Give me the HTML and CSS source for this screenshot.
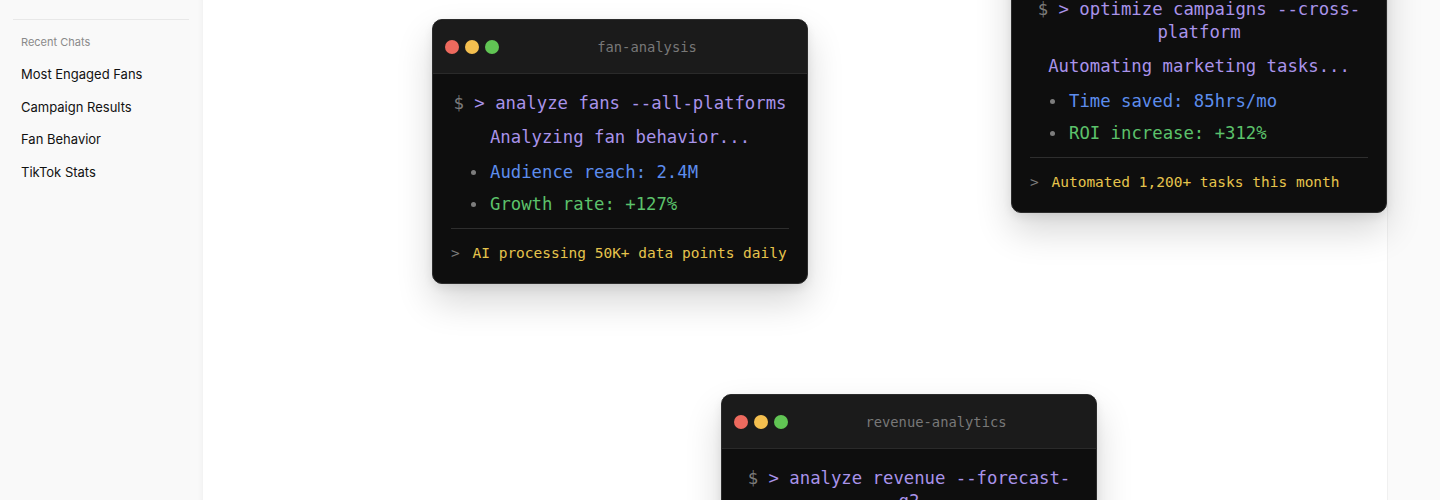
FILE: index.html
```html
<!DOCTYPE html>
<html lang="en">
<head>
<meta charset="utf-8">
<title>Fan Analytics</title>
<link rel="stylesheet" href="styles.css">
</head>
<body>
<div class="app">
  <aside class="sidebar">
    <div class="section">
      <div class="section-label">Recent Chats</div>
      <ul class="chat-list">
        <li>Most Engaged Fans</li>
        <li>Campaign Results</li>
        <li>Fan Behavior</li>
        <li>TikTok Stats</li>
      </ul>
    </div>
  </aside>
  <main class="canvas">
    <div class="terminal t-fan">
      <div class="term-head">
        <div class="dots"><span class="dot red"></span><span class="dot yellow"></span><span class="dot green"></span></div>
        <div class="term-title">fan-analysis</div>
      </div>
      <div class="term-body">
        <div class="cmd"><span class="prompt">$</span> &gt; analyze fans --all-platforms</div>
        <div class="status">Analyzing fan behavior...</div>
        <ul class="stats">
          <li class="blue">Audience reach: 2.4M</li>
          <li class="green-t">Growth rate: +127%</li>
        </ul>
        <div class="foot"><span class="prompt">&gt;</span> AI processing 50K+ data points daily</div>
      </div>
    </div>

    <div class="terminal t-opt">
      <div class="term-head">
        <div class="dots"><span class="dot red"></span><span class="dot yellow"></span><span class="dot green"></span></div>
        <div class="term-title">campaign-optimizer</div>
      </div>
      <div class="term-body">
        <div class="cmd"><span class="prompt">$</span> &gt; optimize campaigns --cross-platform</div>
        <div class="status">Automating marketing tasks...</div>
        <ul class="stats">
          <li class="blue">Time saved: 85hrs/mo</li>
          <li class="green-t">ROI increase: +312%</li>
        </ul>
        <div class="foot"><span class="prompt">&gt;</span> Automated 1,200+ tasks this month</div>
      </div>
    </div>

    <div class="terminal t-rev">
      <div class="term-head">
        <div class="dots"><span class="dot red"></span><span class="dot yellow"></span><span class="dot green"></span></div>
        <div class="term-title">revenue-analytics</div>
      </div>
      <div class="term-body">
        <div class="cmd"><span class="prompt">$</span> &gt; analyze revenue --forecast-q2</div>
        <div class="status">Projecting revenue growth...</div>
        <ul class="stats">
          <li class="blue">Forecast: $1.8M</li>
          <li class="green-t">Accuracy: 94%</li>
        </ul>
        <div class="foot"><span class="prompt">&gt;</span> Revenue insights updated hourly</div>
      </div>
    </div>
  </main>
  <div class="gutter"></div>
</div>
</body>
</html>
```

FILE: styles.css
```css
* { box-sizing: border-box; }
html, body { margin: 0; padding: 0; height: 100%; }
body {
  font-family: Inter, "Liberation Sans", sans-serif;
  background: #fafafa;
  overflow: hidden;
}
.app {
  display: flex;
  height: 500px;
  overflow: hidden;
}
.sidebar {
  width: 203px;
  flex: none;
  background: #f9f9f9;
  padding: 19px 14px 0 13px;
  box-shadow: inset -6px 0 6px -6px rgba(0,0,0,0.06);
  position: relative;
  z-index: 1;
}
.section {
  border-top: 1px solid #e8e8e8;
  padding-top: 14px;
}
.section-label {
  font-size: 11px;
  line-height: 16px;
  color: #8a8a8a;
  padding-left: 8px;
  margin-bottom: 8px;
}
.chat-list {
  list-style: none;
  margin: 0;
  padding: 0;
}
.chat-list li {
  font-size: 13px;
  line-height: 33px;
  height: 32.6px;
  color: #111111;
  padding-left: 8px;
}
.canvas {
  flex: 1;
  position: relative;
  background: #ffffff;
}
.gutter {
  width: 53px;
  flex: none;
  background: #fafafa;
  border-left: 1px solid #f0f0f0;
}
.terminal {
  position: absolute;
  width: 376px;
  background: #0e0e0e;
  border: 1px solid #2c2c2c;
  border-radius: 10px;
  overflow: hidden;
  box-shadow: 0 18px 36px rgba(0,0,0,0.16), 0 4px 10px rgba(0,0,0,0.08);
  font-family: "DejaVu Sans Mono", "Liberation Mono", monospace;
  z-index: 2;
}
.t-fan { left: 229px; top: 19px; }
.t-opt { left: 808px; top: -75px; }
.t-rev { left: 518px; top: 394px; }
.term-head {
  height: 54px;
  display: flex;
  align-items: center;
  padding: 0 12px;
  background: #1b1b1b;
  border-bottom: 1px solid #2a2a2a;
}
.dots {
  display: flex;
  gap: 6px;
}
.dot {
  width: 14px;
  height: 14px;
  border-radius: 50%;
}
.dot.red { background: #ed6a5e; }
.dot.yellow { background: #f4bf4f; }
.dot.green { background: #61c554; }
.term-title {
  flex: 1;
  text-align: center;
  font-size: 13.8px;
  color: #787878;
}
.term-body {
  padding: 18px 18px 20px;
  text-align: center;
}
.cmd {
  font-size: 17.3px;
  line-height: 23px;
  color: #a993ea;
  margin-bottom: 11px;
}
.prompt { color: #7a7a7a; }
.status {
  font-size: 17.3px;
  line-height: 23px;
  color: #a993ea;
  margin-bottom: 12px;
}
.stats {
  list-style: none;
  margin: 0 0 12px;
  padding: 0 0 0 20px;
  text-align: left;
  display: flex;
  flex-direction: column;
  gap: 9px;
}
.stats li {
  font-size: 17.3px;
  line-height: 23px;
  display: flex;
  align-items: center;
}
.stats li::before {
  content: "";
  width: 5px;
  height: 5px;
  border-radius: 50%;
  background: #7c7c7c;
  margin-right: 14px;
  flex: none;
}
.blue { color: #5d8ded; }
.green-t { color: #5cc26b; }
.foot {
  border-top: 1px solid #2e2e2e;
  padding-top: 14px;
  font-size: 14.5px;
  line-height: 20px;
  color: #e6c44c;
  text-align: left;
}
.foot .prompt { margin-right: 4px; }
```
